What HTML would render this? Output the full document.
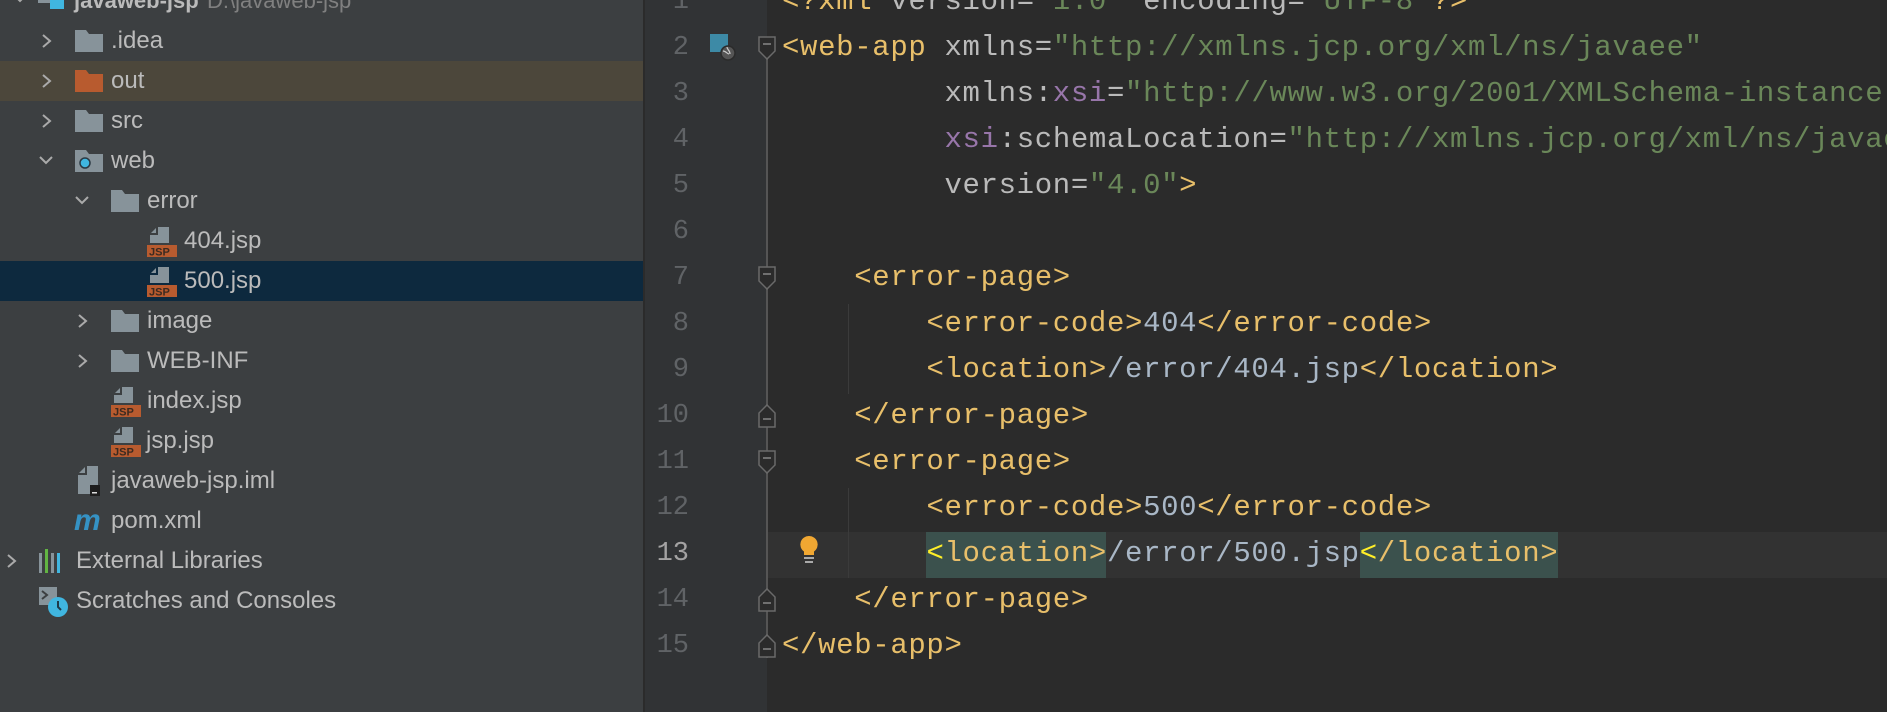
<!DOCTYPE html>
<html><head><meta charset="utf-8"><style>
body{margin:0;width:1887px;height:712px;overflow:hidden;background:#2b2b2b;position:relative;font-family:"Liberation Sans",sans-serif}
#side{position:absolute;left:0;top:0;width:643px;height:712px;background:#3c3f41}
.row{position:absolute;left:0;width:643px;height:40px;line-height:40px;color:#bbbbbb;font-size:24px}
.row span.t{position:absolute;top:0}
.row svg{position:absolute}
#gut{position:absolute;left:645px;top:0;width:122px;height:712px;background:#313335}
.ln{position:absolute;left:645px;width:44px;text-align:right;color:#606366;font-family:"Liberation Mono",monospace;font-size:27px;height:46px;line-height:46px}
.cl{position:absolute;left:782px;height:46px;line-height:46px;white-space:pre;font-family:"Liberation Mono",monospace;font-size:29px;letter-spacing:0.65px;color:#bababa}
.g{color:#e8bf6a}.v{color:#6a8759}.p{color:#9876aa}.x{color:#a9b7c6}
.fold{position:absolute;left:758px;width:18px;height:24px}
</style></head><body>
<div id="side">
<div class="row" style="top:-19px">
<svg style="left:12px;top:10px" width="16" height="16" viewBox="0 0 16 16"><path d="M3 5l5 5 5-5" stroke="#aaa" stroke-width="2" fill="none"/></svg>
<svg style="left:38px;top:6px" width="32" height="30"><rect x="0" y="0" width="24" height="16" fill="#87939a"/><rect x="12" y="8" width="14" height="14" fill="#40b6e0"/></svg>
<span class="t" style="left:74px;font-weight:bold;font-size:22px">javaweb-jsp</span><span class="t" style="left:207px;color:#808080;font-size:22px">D:\javaweb-jsp</span></div>
<div class="row" style="top:21px"><svg style="left:40px;top:12px" width="14" height="16"><path d="M3 2l7 6-7 6" stroke="#aaa" stroke-width="2" fill="none"/></svg>
<svg style="left:75px;top:9px" width="28" height="22"><path d="M0 0h11l3 4h14v18H0z" fill="#87939a"/></svg><span class="t" style="left:111px">.idea</span></div>
<div class="row" style="top:61px;background:#4c473b"><svg style="left:40px;top:12px" width="14" height="16"><path d="M3 2l7 6-7 6" stroke="#aaa" stroke-width="2" fill="none"/></svg>
<svg style="left:75px;top:9px" width="28" height="22"><path d="M0 0h11l3 4h14v18H0z" fill="#b85b2f"/></svg><span class="t" style="left:111px">out</span></div>
<div class="row" style="top:101px"><svg style="left:40px;top:12px" width="14" height="16"><path d="M3 2l7 6-7 6" stroke="#aaa" stroke-width="2" fill="none"/></svg>
<svg style="left:75px;top:9px" width="28" height="22"><path d="M0 0h11l3 4h14v18H0z" fill="#87939a"/></svg><span class="t" style="left:111px">src</span></div>
<div class="row" style="top:141px"><svg style="left:38px;top:12px" width="16" height="16"><path d="M2 4l6 6 6-6" stroke="#aaa" stroke-width="2" fill="none"/></svg>
<svg style="left:75px;top:9px" width="28" height="22"><path d="M0 0h11l3 4h14v18H0z" fill="#87939a"/><circle cx="10" cy="13" r="5" fill="#40b6e0" stroke="#2b3a44" stroke-width="1.5"/></svg><span class="t" style="left:111px">web</span></div>
<div class="row" style="top:181px"><svg style="left:74px;top:12px" width="16" height="16"><path d="M2 4l6 6 6-6" stroke="#aaa" stroke-width="2" fill="none"/></svg>
<svg style="left:111px;top:9px" width="28" height="22"><path d="M0 0h11l3 4h14v18H0z" fill="#87939a"/></svg><span class="t" style="left:147px">error</span></div>
<div class="row" style="top:221px"><svg style="left:147px;top:6px" width="30" height="30"><path d="M10 0h12v16H3V7z" fill="#87939a"/><path d="M3 7h7V0" fill="none" stroke="#3c3f41" stroke-width="2"/><rect x="0" y="18" width="30" height="12" fill="#b85b2f"/><text x="2" y="28.5" font-size="11" font-family="Liberation Sans" fill="#3c2a20" font-weight="bold">JSP</text></svg><span class="t" style="left:184px">404.jsp</span></div>
<div class="row" style="top:261px;background:#0d293e"><svg style="left:147px;top:6px" width="30" height="30"><path d="M10 0h12v16H3V7z" fill="#87939a"/><path d="M3 7h7V0" fill="none" stroke="#0d293e" stroke-width="2"/><rect x="0" y="18" width="30" height="12" fill="#b85b2f"/><text x="2" y="28.5" font-size="11" font-family="Liberation Sans" fill="#3c2a20" font-weight="bold">JSP</text></svg><span class="t" style="left:184px">500.jsp</span></div>
<div class="row" style="top:301px"><svg style="left:76px;top:12px" width="14" height="16"><path d="M3 2l7 6-7 6" stroke="#aaa" stroke-width="2" fill="none"/></svg>
<svg style="left:111px;top:9px" width="28" height="22"><path d="M0 0h11l3 4h14v18H0z" fill="#87939a"/></svg><span class="t" style="left:147px">image</span></div>
<div class="row" style="top:341px"><svg style="left:76px;top:12px" width="14" height="16"><path d="M3 2l7 6-7 6" stroke="#aaa" stroke-width="2" fill="none"/></svg>
<svg style="left:111px;top:9px" width="28" height="22"><path d="M0 0h11l3 4h14v18H0z" fill="#87939a"/></svg><span class="t" style="left:147px">WEB-INF</span></div>
<div class="row" style="top:381px"><svg style="left:111px;top:6px" width="30" height="30"><path d="M10 0h12v16H3V7z" fill="#87939a"/><path d="M3 7h7V0" fill="none" stroke="#3c3f41" stroke-width="2"/><rect x="0" y="18" width="30" height="12" fill="#b85b2f"/><text x="2" y="28.5" font-size="11" font-family="Liberation Sans" fill="#3c2a20" font-weight="bold">JSP</text></svg><span class="t" style="left:147px">index.jsp</span></div>
<div class="row" style="top:421px"><svg style="left:111px;top:6px" width="30" height="30"><path d="M10 0h12v16H3V7z" fill="#87939a"/><path d="M3 7h7V0" fill="none" stroke="#3c3f41" stroke-width="2"/><rect x="0" y="18" width="30" height="12" fill="#b85b2f"/><text x="2" y="28.5" font-size="11" font-family="Liberation Sans" fill="#3c2a20" font-weight="bold">JSP</text></svg><span class="t" style="left:146px">jsp.jsp</span></div>
<div class="row" style="top:461px"><svg style="left:78px;top:5px" width="28" height="32"><path d="M8 0h12v28H0V8z" fill="#87939a"/><path d="M0 8h8V0" fill="none" stroke="#3c3f41" stroke-width="2"/><rect x="12" y="19" width="10" height="11" fill="#1e1e1e"/><rect x="14" y="26" width="5" height="1.5" fill="#ddd"/></svg><span class="t" style="left:111px">javaweb-jsp.iml</span></div>
<div class="row" style="top:501px"><span class="t" style="left:74px;color:#3592c4;font-weight:bold;font-style:italic;font-size:30px">m</span><span class="t" style="left:111px">pom.xml</span></div>
<div class="row" style="top:541px"><svg style="left:5px;top:12px" width="14" height="16"><path d="M3 2l7 6-7 6" stroke="#aaa" stroke-width="2" fill="none"/></svg>
<svg style="left:39px;top:8px" width="26" height="24"><rect x="0" y="4" width="3" height="20" fill="#87939a"/><rect x="6" y="0" width="3" height="24" fill="#62b543"/><rect x="12" y="4" width="3" height="20" fill="#87939a"/><rect x="18" y="4" width="3" height="20" fill="#40b6e0"/></svg><span class="t" style="left:76px">External Libraries</span></div>
<div class="row" style="top:581px"><svg style="left:39px;top:6px" width="32" height="32"><rect x="0" y="0" width="18" height="18" fill="#87939a"/><path d="M3 4l5 4-5 4" stroke="#3c3f41" stroke-width="2" fill="none"/><circle cx="19" cy="20" r="10" fill="#40b6e0"/><path d="M19 14v6l3 3" stroke="#1e3a4a" stroke-width="2" fill="none"/></svg><span class="t" style="left:76px">Scratches and Consoles</span></div>
</div>

<div id="gut"></div>
<div style="position:absolute;left:766px;top:532px;width:1121px;height:46px;background:#323232"></div>
<div style="position:absolute;left:766px;top:38px;width:2px;height:620px;background:#555"></div>
<div style="position:absolute;left:848px;top:304px;width:1px;height:90px;background:#3b3b3b"></div>
<div style="position:absolute;left:848px;top:488px;width:1px;height:90px;background:#3b3b3b"></div>

<svg class="fold" style="top:36px" viewBox="0 0 18 24"><path d="M1 1h16v14l-8 8-8-8z" fill="#2b2b2b" stroke="#6a6a6a" stroke-width="1.5"/><path d="M5 8h8" stroke="#888" stroke-width="1.5"/></svg>
<svg class="fold" style="top:266px" viewBox="0 0 18 24"><path d="M1 1h16v14l-8 8-8-8z" fill="#2b2b2b" stroke="#6a6a6a" stroke-width="1.5"/><path d="M5 8h8" stroke="#888" stroke-width="1.5"/></svg>
<svg class="fold" style="top:450px" viewBox="0 0 18 24"><path d="M1 1h16v14l-8 8-8-8z" fill="#2b2b2b" stroke="#6a6a6a" stroke-width="1.5"/><path d="M5 8h8" stroke="#888" stroke-width="1.5"/></svg>
<svg class="fold" style="top:404px" viewBox="0 0 18 24"><path d="M1 23h16V9L9 1 1 9z" fill="#2b2b2b" stroke="#6a6a6a" stroke-width="1.5"/><path d="M5 15h8" stroke="#888" stroke-width="1.5"/></svg>
<svg class="fold" style="top:588px" viewBox="0 0 18 24"><path d="M1 23h16V9L9 1 1 9z" fill="#2b2b2b" stroke="#6a6a6a" stroke-width="1.5"/><path d="M5 15h8" stroke="#888" stroke-width="1.5"/></svg>
<svg class="fold" style="top:634px" viewBox="0 0 18 24"><path d="M1 23h16V9L9 1 1 9z" fill="#2b2b2b" stroke="#6a6a6a" stroke-width="1.5"/><path d="M5 15h8" stroke="#888" stroke-width="1.5"/></svg>

<svg style="position:absolute;left:710px;top:34px" width="28" height="28"><rect x="0" y="0" width="18" height="18" fill="#3d8aa6"/><circle cx="18" cy="19" r="7" fill="#555" stroke="#2b2b2b" stroke-width="1.5"/><path d="M13 17c3 0 4 3 6 3M17 13c0 3 3 3 3 7" stroke="#ccc" stroke-width="1.2" fill="none"/></svg>
<svg style="position:absolute;left:798px;top:535px" width="22" height="30"><path d="M11 1a8.5 8.5 0 0 0-5 15.5V20h10v-3.5A8.5 8.5 0 0 0 11 1z" fill="#f0a732"/><rect x="6" y="22" width="10" height="2" fill="#aaa"/><rect x="7" y="26" width="8" height="2" fill="#aaa"/></svg>

<div class="ln" style="top:-21px">1</div><div class="ln" style="top:25px">2</div><div class="ln" style="top:71px">3</div><div class="ln" style="top:117px">4</div><div class="ln" style="top:163px">5</div><div class="ln" style="top:209px">6</div><div class="ln" style="top:255px">7</div><div class="ln" style="top:301px">8</div><div class="ln" style="top:347px">9</div><div class="ln" style="top:393px">10</div><div class="ln" style="top:439px">11</div><div class="ln" style="top:485px">12</div><div class="ln" style="top:531px;color:#a4a3a3">13</div><div class="ln" style="top:577px">14</div><div class="ln" style="top:623px">15</div>

<div style="position:absolute;left:926px;top:532px;width:180px;height:46px;background:#3b514d"></div>
<div style="position:absolute;left:1360px;top:532px;width:198px;height:46px;background:#3b514d"></div>

<div class="cl" style="top:-21px"><span class="g">&lt;?xml</span> version=<span class="v">"1.0"</span> encoding=<span class="v">"UTF-8"</span><span class="g">?&gt;</span></div>
<div class="cl" style="top:25px"><span class="g">&lt;web-app</span> xmlns=<span class="v">"http://xmlns.jcp.org/xml/ns/javaee"</span></div>
<div class="cl" style="top:71px">         xmlns:<span class="p">xsi</span>=<span class="v">"http://www.w3.org/2001/XMLSchema-instance"</span></div>
<div class="cl" style="top:117px">         <span class="p">xsi</span>:schemaLocation=<span class="v">"http://xmlns.jcp.org/xml/ns/javaee</span></div>
<div class="cl" style="top:163px">         version=<span class="v">"4.0"</span><span class="g">&gt;</span></div>
<div class="cl" style="top:255px">    <span class="g">&lt;error-page&gt;</span></div>
<div class="cl" style="top:301px">        <span class="g">&lt;error-code&gt;</span><span class="x">404</span><span class="g">&lt;/error-code&gt;</span></div>
<div class="cl" style="top:347px">        <span class="g">&lt;location&gt;</span><span class="x">/error/404.jsp</span><span class="g">&lt;/location&gt;</span></div>
<div class="cl" style="top:393px">    <span class="g">&lt;/error-page&gt;</span></div>
<div class="cl" style="top:439px">    <span class="g">&lt;error-page&gt;</span></div>
<div class="cl" style="top:485px">        <span class="g">&lt;error-code&gt;</span><span class="x">500</span><span class="g">&lt;/error-code&gt;</span></div>
<div class="cl" style="top:531px">        <span class="g"><span style="color:#ffef28">&lt;</span>location&gt;</span><span class="x">/error/500.jsp</span><span class="g"><span style="color:#ffef28">&lt;</span>/location&gt;</span></div>
<div class="cl" style="top:577px">    <span class="g">&lt;/error-page&gt;</span></div>
<div class="cl" style="top:623px"><span class="g">&lt;/web-app&gt;</span></div>
</body></html>
